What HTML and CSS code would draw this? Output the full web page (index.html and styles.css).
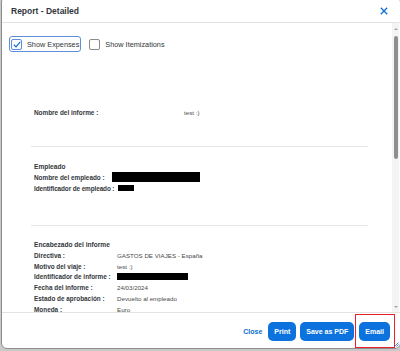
FILE: index.html
```html
<!DOCTYPE html>
<html lang="en">

<head>
    <meta charset="UTF-8">
    <meta name="viewport" content="width=device-width, initial-scale=1.0">
    <title>Report - Detailed</title>
    <link rel="stylesheet" href="styles.css">
</head>

<body>

    <div class="dialog">
        <!-- Header -->
        <div class="dialog-header">
            <div class="dialog-title">Report - Detailed</div>
            <button class="close-x" aria-label="Close">
                <svg width="8" height="8" viewBox="0 0 8 8">
                    <path d="M0.8 0.8 L7.2 7.2 M7.2 0.8 L0.8 7.2" stroke="#0a6ed1" stroke-width="1.3" fill="none" />
                </svg>
            </button>
        </div>

        <!-- Body -->
        <div class="dialog-body">
            <div class="content">
                <div class="options">
                    <label class="check focused">
                        <span class="box checked">
                            <svg width="8" height="7" viewBox="0 0 8 7">
                                <path d="M0.8 3.6 L3 5.8 L7.2 0.8" stroke="#0a6ed1" stroke-width="1.2" fill="none" />
                            </svg>
                        </span>
                        Show Expenses
                    </label>
                    <label class="check">
                        <span class="box"></span>
                        Show Itemizations
                    </label>
                </div>

                <div class="report">
                    <div class="section section-name">
                        <div class="row">
                            <span class="label name-label">Nombre del informe :</span>
                            <span class="value">test :)</span>
                        </div>
                    </div>

                    <div class="section section-employee">
                        <div class="section-title">Empleado</div>
                        <div class="row">
                            <span class="label emp-name">Nombre del empleado :</span>
                            <span class="redacted" style="width: 88px; height: 10px;"></span>
                        </div>
                        <div class="row">
                            <span class="label emp-id">Identificador de empleado :</span>
                            <span class="redacted" style="width: 16px; height: 6px;"></span>
                        </div>
                    </div>

                    <div class="section section-header">
                        <div class="section-title">Encabezado del informe</div>
                        <div class="row">
                            <span class="label head-label">Directiva :</span>
                            <span class="value">GASTOS DE VIAJES - España</span>
                        </div>
                        <div class="row">
                            <span class="label head-label">Motivo del viaje :</span>
                            <span class="value">test :)</span>
                        </div>
                        <div class="row">
                            <span class="label head-label">Identificador de informe :</span>
                            <span class="redacted" style="width: 71px; height: 7px;"></span>
                        </div>
                        <div class="row">
                            <span class="label head-label">Fecha del informe :</span>
                            <span class="value">24/03/2024</span>
                        </div>
                        <div class="row">
                            <span class="label head-label">Estado de aprobación :</span>
                            <span class="value">Devuelto al empleado</span>
                        </div>
                        <div class="row">
                            <span class="label head-label">Moneda :</span>
                            <span class="value">Euro</span>
                        </div>
                    </div>
                </div>
            </div>

            <!-- Scrollbar -->
            <div class="scrollbar">
                <span class="arrow up"></span>
                <div class="track">
                    <div class="thumb"></div>
                </div>
                <span class="arrow down"></span>
            </div>
        </div>

        <!-- Footer -->
        <div class="dialog-footer">
            <button class="link-btn">Close</button>
            <button class="btn">Print</button>
            <button class="btn">Save as PDF</button>
            <div class="highlight-wrap">
                <button class="btn">Email</button>
                <span class="highlight"></span>
            </div>
        </div>

        <svg class="grip" width="5" height="5" viewBox="0 0 5 5">
            <path d="M4.5 0.5 L0.5 4.5 M4.5 2.5 L2.5 4.5" stroke="#0a6ed1" stroke-width="0.8" fill="none" />
        </svg>
    </div>

</body>

</html>
```

FILE: styles.css
```css
body {
    margin: 0;
    background-color: #c9c9c9;
    font-family: "Liberation Sans", Arial, sans-serif;
    color: #32363a;
    height: 351px;
    overflow: hidden;
}

/* Dialog frame */
.dialog {
    position: relative;
    box-sizing: border-box;
    width: 400px;
    height: 353px;
    margin: -4px 0 0 1px;
    background-color: white;
    border: 1px solid #8e8e8e;
    border-radius: 6px;
    display: flex;
    flex-direction: column;
    overflow: hidden;
}

.dialog-header {
    height: 26px;
    padding: 3px 8px 0 9px;
    box-sizing: border-box;
    display: flex;
    align-items: center;
    justify-content: space-between;
    border-bottom: 1px solid #e3e3e3;
    flex-shrink: 0;
}

.dialog-title {
    font-size: 8.5px;
    font-weight: bold;
    color: #32363a;
}

.close-x {
    border: none;
    background: none;
    padding: 0;
    margin-right: 4px;
    display: flex;
}

/* Body with content + scrollbar */
.dialog-body {
    flex: 1;
    display: flex;
    min-height: 0;
}

.content {
    flex: 1;
    overflow: hidden;
    padding-top: 13px;
}

.options {
    display: flex;
    align-items: center;
    gap: 8px;
    padding-left: 7px;
}

.check {
    display: flex;
    align-items: center;
    gap: 5px;
    height: 16px;
    box-sizing: border-box;
    font-size: 7.3px;
    color: #32363a;
    white-space: nowrap;
}

.check.focused {
    border: 1px solid #5d8fdc;
    border-radius: 3px;
    padding: 0 1px 0 1px;
}

.box {
    width: 11px;
    height: 11px;
    box-sizing: border-box;
    border: 1px solid #8a8a8a;
    border-radius: 2px;
    display: flex;
    align-items: center;
    justify-content: center;
}

.box.checked {
    border-color: #5d8fdc;
}

/* Report */
.report {
    margin: 0 24px 0 29px;
}

.section {
    border-bottom: 1px solid #e6e6e6;
    padding-left: 3px;
}

.section-name {
    padding-top: 55px;
    padding-bottom: 28px;
}

.section-employee {
    padding-top: 14px;
    padding-bottom: 31px;
}

.section-header {
    padding-top: 13px;
    border-bottom: none;
}

.section-title {
    font-size: 6.6px;
    font-weight: bold;
    line-height: 11px;
    color: #32363a;
}

.row {
    display: flex;
    align-items: center;
    height: 10.9px;
    white-space: nowrap;
}

.label {
    font-size: 6.4px;
    font-weight: bold;
    color: #32363a;
    flex-shrink: 0;
}

.name-label {
    width: 150px;
}

.emp-name {
    width: 78px;
}

.emp-id {
    margin-right: 4px;
    letter-spacing: -0.1px;
}

.head-label {
    width: 83px;
}

.value {
    font-size: 6.2px;
    color: #4a4a4a;
}

.redacted {
    display: inline-block;
    background-color: #000;
}

/* Fake scrollbar */
.scrollbar {
    width: 7px;
    margin-right: 1px;
    background-color: #f4f4f4;
    display: flex;
    flex-direction: column;
    align-items: center;
    padding: 5px 0 4px;
    box-sizing: border-box;
}

.arrow {
    width: 0;
    height: 0;
    border-left: 2px solid transparent;
    border-right: 2px solid transparent;
}

.arrow.up {
    border-bottom: 2px solid #a3a3a3;
}

.arrow.down {
    border-top: 2px solid #a3a3a3;
}

.track {
    flex: 1;
    width: 100%;
    display: flex;
    justify-content: center;
    padding-top: 6px;
}

.thumb {
    width: 4px;
    height: 123px;
    background-color: #8f8f8f;
    border-radius: 2px;
}

/* Footer */
.dialog-footer {
    height: 36px;
    flex-shrink: 0;
    border-top: 1px solid #e3e3e3;
    display: flex;
    align-items: center;
    justify-content: flex-end;
    gap: 4px;
    padding: 2px 10px 0 0;
    box-sizing: border-box;
}

.link-btn {
    border: none;
    background: none;
    color: #0a6ed1;
    font-family: inherit;
    font-size: 7px;
    font-weight: bold;
    padding: 0;
    margin-right: 2px;
}

.btn {
    height: 19px;
    padding: 0 6px;
    border: none;
    border-radius: 5px;
    background-color: #0b72de;
    color: white;
    font-family: inherit;
    font-size: 7px;
    font-weight: bold;
}

.highlight-wrap {
    position: relative;
    display: flex;
    margin-left: 1px;
}

.highlight {
    position: absolute;
    top: -8px;
    bottom: -7px;
    left: -4px;
    right: -5px;
    border: 1px solid #e8212a;
}

.grip {
    position: absolute;
    right: 1px;
    bottom: 1px;
}
```
